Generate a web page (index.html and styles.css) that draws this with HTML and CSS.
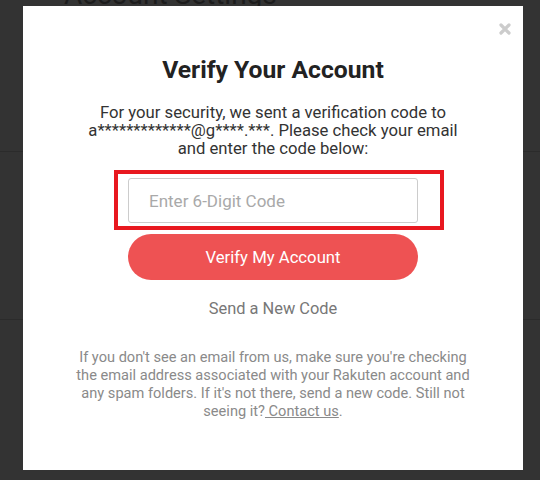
FILE: index.html
```html
<!DOCTYPE html>
<html>
<head>
<meta charset="utf-8">
<link rel="stylesheet" href="styles.css">
</head>
<body>
<div class="page">
  <h1 class="page-title">Account Settings</h1>
  <div class="page-rule rule-a"></div>
  <div class="page-rule rule-b"></div>
</div>
<div class="modal">
  <button class="close" aria-label="Close">
    <svg width="12" height="12" viewBox="0 0 12 12"><path d="M2 2L10 10M10 2L2 10" stroke="#cccccc" stroke-width="3.2" stroke-linecap="round"/></svg>
  </button>
  <h2 class="title">Verify Your Account</h2>
  <p class="desc">For your security, we sent a verification code to a*************@g****.***. Please check your email and enter the code below:</p>
  <div class="highlight">
    <input class="code" type="text" placeholder="Enter 6-Digit Code">
  </div>
  <button class="verify">Verify My Account</button>
  <a class="resend" href="#">Send a New Code</a>
  <p class="help">If you don't see an email from us, make sure you're checking the email address associated with your Rakuten account and any spam folders. If it's not there, send a new code. Still not seeing it?<a href="#" class="contact"> Contact us</a>.</p>
</div>
</body>
</html>
```
FILE: styles.css
```css
html, body {
  margin: 0;
  padding: 0;
}
body {
  width: 540px;
  height: 480px;
  background: #333333;
  overflow: hidden;
  position: relative;
  font-family: Roboto, "Liberation Sans", sans-serif;
}
.page {
  height: 480px;
  position: relative;
}
.page-title {
  margin: 0;
  padding: 0 0 0 64px;
  font-family: Roboto, "Liberation Sans", sans-serif;
  font-weight: normal;
  font-size: 28px;
  line-height: 28px;
  color: #1c1c1c;
  transform: translateY(-19px);
}
.page-rule {
  height: 1px;
  background: #2b2b2b;
  position: absolute;
  left: 0;
  right: 0;
}
.rule-a { top: 151px; }
.rule-b { top: 319px; }
.modal {
  position: absolute;
  left: 23px;
  top: 6px;
  width: 500px;
  height: 464px;
  background: #ffffff;
  box-sizing: border-box;
  padding-top: 49px;
  display: flex;
  flex-direction: column;
  align-items: center;
}
.close {
  position: absolute;
  top: 17px;
  right: 12px;
  background: none;
  border: 0;
  padding: 0;
  width: 12px;
  height: 12px;
  display: flex;
}
.title {
  margin: 0;
  font-size: 24.7px;
  line-height: 30px;
  font-weight: 700;
  color: #222222;
}
.desc {
  margin: 19px 0 0;
  width: 392px;
  text-align: center;
  font-size: 16.7px;
  line-height: 18px;
  color: #333333;
}
.highlight {
  margin-top: 12px;
  margin-left: 12px;
  border: 4px solid #e8181f;
  padding: 4px 22px 3px 10px;
}
.code {
  display: block;
  box-sizing: border-box;
  width: 290px;
  height: 45px;
  border: 1px solid #cccccc;
  border-radius: 3px;
  padding: 0 0 0 20px;
  font-family: inherit;
  font-size: 17px;
  color: #333333;
  outline: none;
}
.code::placeholder {
  color: #a9a9a9;
}
.verify {
  margin-top: 4px;
  width: 290px;
  height: 46px;
  border: 0;
  border-radius: 23px;
  background: #ee5253;
  color: #ffffff;
  font-family: inherit;
  font-size: 16.7px;
}
.resend {
  margin-top: 20px;
  font-size: 16.4px;
  line-height: 18px;
  color: #777777;
  text-decoration: none;
}
.help {
  margin: 30px 0 0;
  width: 396px;
  text-align: center;
  font-size: 14.6px;
  line-height: 18px;
  color: #8a8a8a;
}
.contact {
  color: #8a8a8a;
  text-decoration: underline;
}
```
